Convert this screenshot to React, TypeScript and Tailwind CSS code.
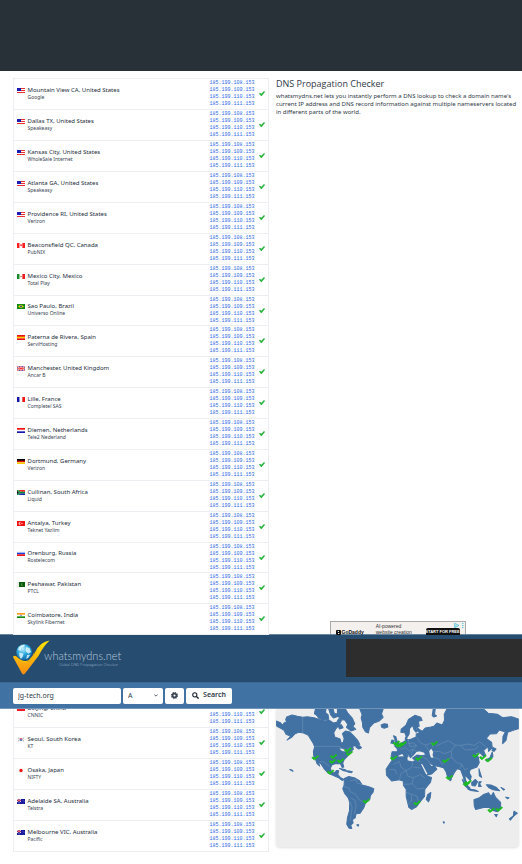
import React from "react";

type Server = { flag: string; place: string; provider: string };

const upperServers: Server[] = [
  { flag: "us", place: "Mountain View CA, United States", provider: "Google" },
  { flag: "us", place: "Dallas TX, United States", provider: "Speakeasy" },
  { flag: "us", place: "Kansas City, United States", provider: "WholeSale Internet" },
  { flag: "us", place: "Atlanta GA, United States", provider: "Speakeasy" },
  { flag: "us", place: "Providence RI, United States", provider: "Verizon" },
  { flag: "ca", place: "Beaconsfield QC, Canada", provider: "PubNIX" },
  { flag: "mx", place: "Mexico City, Mexico", provider: "Total Play" },
  { flag: "br", place: "Sao Paulo, Brazil", provider: "Universo Online" },
  { flag: "es", place: "Paterna de Rivera, Spain", provider: "ServiHosting" },
  { flag: "gb", place: "Manchester, United Kingdom", provider: "Ancar B" },
  { flag: "fr", place: "Lille, France", provider: "Completel SAS" },
  { flag: "nl", place: "Diemen, Netherlands", provider: "Tele2 Nederland" },
  { flag: "de", place: "Dortmund, Germany", provider: "Verizon" },
  { flag: "za", place: "Cullinan, South Africa", provider: "Liquid" },
  { flag: "tr", place: "Antalya, Turkey", provider: "Teknet Yazlim" },
  { flag: "ru", place: "Orenburg, Russia", provider: "Rostelecom" },
  { flag: "pk", place: "Peshawar, Pakistan", provider: "PTCL" },
  { flag: "in", place: "Coimbatore, India", provider: "Skylink Fibernet" },
];

const lowerServers: Server[] = [
  { flag: "cn", place: "Beijing, China", provider: "CNNIC" },
  { flag: "kr", place: "Seoul, South Korea", provider: "KT" },
  { flag: "jp", place: "Osaka, Japan", provider: "NIFTY" },
  { flag: "au", place: "Adelaide SA, Australia", provider: "Telstra" },
  { flag: "au", place: "Melbourne VIC, Australia", provider: "Pacific" },
];

const addresses = ["185.199.108.153", "185.199.109.153", "185.199.110.153", "185.199.111.153"];

const horizontal = (a: string, b: string, c: string) => (
  <>
    <path fill={a} d="M0 0h24v6H0z" />
    <path fill={b} d="M0 5h24v5H0z" />
    <path fill={c} d="M0 10h24v5H0z" />
  </>
);

const vertical = (a: string, b: string, c: string) => (
  <>
    <path fill={a} d="M0 0h8v15H0z" />
    <path fill={b} d="M8 0h8v15H8z" />
    <path fill={c} d="M16 0h8v15h-8z" />
  </>
);

const flags: Record<string, React.ReactNode> = {
  us: (
    <>
      <path fill="#fff" d="M0 0h24v15H0z" />
      <path fill="#ea3030" d="M12 0h12v3H12zM12 6h12v3H12zM0 12h24v3H0z" />
      <path fill="#1c1cb0" d="M0 0h12v9H0z" />
    </>
  ),
  ca: (
    <>
      {vertical("#f22", "#fff", "#f22")}
      <path fill="#f22" d="M12 2l1 3 2-1-1 5-2 1v3-3l-2-1-1-5 2 1z" />
    </>
  ),
  mx: (
    <>
      {vertical("#178a2c", "#fff", "#ee2020")}
      <circle cx="12" cy="7.500" r="2.500" fill="#a47a48" />
    </>
  ),
  br: (
    <>
      <path fill="#138a13" d="M0 0h24v15H0z" />
      <path fill="#f4d90a" d="M12 2l9 5.500-9 5.500-9-5.500z" />
      <circle cx="12" cy="7.500" r="3" fill="#2747a5" />
    </>
  ),
  es: horizontal("#e81010", "#ffd400", "#e81010"),
  gb: (
    <>
      <path fill="#1c2fa0" d="M0 0h24v15H0z" />
      <path stroke="#fff" strokeWidth="4" d="M0 0l24 15M24 0L0 15M12 0v15M0 7.500h24" />
      <path stroke="#e22" strokeWidth="2" d="M0 0l24 15M24 0L0 15M12 0v15M0 7.500h24" />
    </>
  ),
  fr: vertical("#1212a8", "#fff", "#f01414"),
  nl: horizontal("#f01010", "#fff", "#1616b0"),
  de: horizontal("#000", "#e01010", "#ffd000"),
  za: (
    <>
      <path fill="#e22" d="M0 0h24v7H0z" />
      <path fill="#1830a8" d="M0 8h24v7H0z" />
      <path stroke="#fff" strokeWidth="5" fill="none" d="M0 0l10 7.500L0 15M10 7.500h14" />
      <path stroke="#0b8a3a" strokeWidth="4" fill="none" d="M0 0l10 7.500L0 15M10 7.500h14" />
      <path fill="#111" d="M0 3l6 4.500L0 12z" />
    </>
  ),
  tr: (
    <>
      <path fill="#f01414" d="M0 0h24v15H0z" />
      <circle cx="9" cy="7.500" r="4" fill="#fff" />
      <circle cx="10.500" cy="7.500" r="3" fill="#f01414" />
      <circle cx="15" cy="7.500" r="1.500" fill="#fff" />
    </>
  ),
  ru: horizontal("#f4f4f4", "#1440e0", "#f01414"),
  pk: (
    <>
      <path fill="#eee" d="M0 0h6v15H0z" />
      <path fill="#0a5c0a" d="M6 0h18v15H6z" />
      <circle cx="15" cy="7.500" r="3" fill="#cfe3cf" />
      <circle cx="16" cy="6.500" r="3" fill="#0a5c0a" />
    </>
  ),
  in: (
    <>
      {horizontal("#ff9a1c", "#fff", "#128a12")}
      <circle cx="12" cy="7.500" r="2" fill="#5b6fb4" />
    </>
  ),
  cn: (
    <>
      <path fill="#ee1c25" d="M0 0h24v15H0z" />
      <circle cx="5" cy="5" r="2" fill="#ffde00" />
    </>
  ),
  kr: (
    <>
      <path fill="#fafafa" d="M0 0h24v15H0z" />
      <path stroke="#444" strokeWidth="2" d="M4 3l3 2M20 3l-3 2M4 12l3-2M20 12l-3-2" />
      <path fill="#e0203c" d="M8 7.500a4 4 0 018 0z" />
      <path fill="#1c4fb0" d="M8 7.500a4 4 0 008 0z" />
    </>
  ),
  jp: (
    <>
      <path fill="#fafafa" d="M0 0h24v15H0z" />
      <circle cx="12" cy="7.500" r="5" fill="#f01414" />
    </>
  ),
  au: (
    <>
      <path fill="#14149c" d="M0 0h24v15H0z" />
      <path stroke="#fff" strokeWidth="3" d="M0 0l12 8M12 0L0 8" />
      <path stroke="#e22" strokeWidth="2" d="M6 0v8M0 4h12" />
      <circle cx="18" cy="4" r="1" fill="#fff" />
      <circle cx="21" cy="7" r="1" fill="#fff" />
      <circle cx="18" cy="12" r="1" fill="#fff" />
      <circle cx="6" cy="11.500" r="1.500" fill="#fff" />
    </>
  ),
};

function Flag({ code }: { code: string }) {
  return (
    <svg viewBox="0 0 24 15" className="block h-[5px] w-2" aria-hidden="true">
      {flags[code]}
    </svg>
  );
}

function ServerTable({ servers }: { servers: Server[] }) {
  return (
    <table className="w-full border-collapse border border-[#eceef1]">
      <tbody>
        {servers.map((s) => (
          <tr key={s.place} className="h-[31px] border-b border-[#eceef1] nth-[8n]:h-[30px]">
            <td className="w-[14px] p-0 pb-[2px] pl-[3px] align-middle">
              <div className="flex h-[15px] items-start pt-[2px]">
                <Flag code={s.flag} />
              </div>
            </td>
            <td className="p-0 pb-[2px] align-middle">
              <div className="text-[6px] leading-[8px] text-[#232d3b]">{s.place}</div>
              <div className="text-[5px] leading-[7px] text-[#384252]">{s.provider}</div>
            </td>
            <td className="w-[45px] p-0 align-middle font-['Liberation_Mono',monospace] text-[5px] leading-[7px] text-[#2f68e6]">
              {addresses.map((a) => (
                <a key={a} href="#" className="block whitespace-nowrap">
                  {a}
                </a>
              ))}
            </td>
            <td className="w-[14px] p-0 pb-px pl-1 align-middle">
              <svg viewBox="0 0 18 15" className="block h-[5px] w-[6px]" role="img" aria-label="Resolved">
                <path d="M0 8l3-3 4 3L15 0l3 3L8 15H6z" fill="#28b23e" />
              </svg>
            </td>
          </tr>
        ))}
      </tbody>
    </table>
  );
}

function Logo() {
  return (
    <svg viewBox="0 0 112 108" className="h-9 w-[37px]" aria-hidden="true">
      <defs>
        <linearGradient id="gold" x1="0" y1="0" x2="0" y2="1">
          <stop offset="0" stopColor="#ffe606" />
          <stop offset="1" stopColor="#f98a10" />
        </linearGradient>
        <radialGradient id="globe" cx="0.4" cy="0.3" r="0.7">
          <stop offset="0" stopColor="#bdeeff" />
          <stop offset="0.5" stopColor="#2fa9df" />
          <stop offset="1" stopColor="#0d6cab" />
        </radialGradient>
      </defs>
      <path d="M0 51Q2 45 10 49Q34 74 50 63Q59 56 66 38Q82 4 111 1Q92 18 77 48L38 99Q31 109 26 99Z" fill="url(#gold)" />
      <circle cx="34" cy="36" r="26" fill="#234969" />
      <circle cx="34" cy="36" r="24" fill="url(#globe)" />
      <path d="M17 22q9-10 19-8l-3 7-7 2-3 9-7-2zM40 21l10 3 5 12-9 5-8-8zM19 37l13 4-3 10-5 6-5-9zM43 45l9-1-7 11-5 1z" fill="#e9fbff" opacity="0.8" />
      <path d="M11 50q22 20 38 9 10-8 16-23-2 27-27 32-17 0-27-18z" fill="#f9bd0a" />
    </svg>
  );
}

const landMasses = [
  // North America
  "M20 75L18 60 30 64 38 73 42 66 50 63 47 56 50 48 66 42 82 46 98 49 112 47 132 50 150 56 164 60 178 58 190 66 200 64 206 53 214 58 208 72 197 84 191 95 194 108 210 114 214 127 220 123 222 112 217 98 226 90 239 93 250 104 263 118 269 130 256 134 247 136 250 144 240 153 231 167 222 176 218 186 221 198 216 199 211 188 198 187 186 191 181 201 184 212 192 216 200 208 206 209 203 220 210 229 222 235 216 238 204 229 190 223 173 215 162 203 153 189 144 181 149 195 141 188 136 173 131 164 130 151 134 137 128 124 115 103 101 96 86 94 75 98 66 108 51 117 62 106 48 100 42 88 29 80Z",
  // Arctic islands
  "M136 24L168 24 166 35 174 41 176 55 159 58 146 52 141 44 133 38Z",
  "M176 24L189 24 193 38 202 38 202 24 226 24 233 36 247 52 254 68 248 76 257 85 243 90 229 79 233 70 224 57 212 56 205 46 190 51 182 42Z",
  "M204 73L214 71 219 80 208 84Z",
  // Greenland
  "M269 24L339 24 334 39 339 49 326 61 311 66 298 80 295 96 286 92 278 79 277 65 273 51 276 41Z",
  "M333 72L342 68 352 70 353 78 342 82 334 78Z",
  // Caribbean
  "M208 202L224 205 232 211 218 208ZM233 209L247 212 244 215 233 213Z",
  "M257 133L268 134 274 140 266 144 258 139Z",
  // South America
  "M223 232L236 226 255 231 268 239 276 252 296 257 311 263 309 273 301 283 299 295 286 306 281 320 270 336 258 338 255 350 247 355 249 365 242 372 245 382 237 381 230 369 232 350 238 329 239 305 235 291 224 277 218 263 222 252Z",
  "M260 371L266 371 264 375Z",
  // Africa
  "M367 176L379 168 410 167 411 179 426 183 435 179 453 184 460 204 469 225 484 229 481 243 464 264 463 286 450 302 439 317 424 325 416 319 408 286 408 264 400 253 399 240 387 236 365 240 349 222 348 204 356 192Z",
  "M472 281L482 274 480 290 475 302 468 295Z",
  // Eurasia
  "M365 176L363 164 366 152 382 152 381 142 374 136 386 134 397 124 405 120 406 108 413 117 424 114 438 108 438 99 451 94 439 91 441 81 456 91 465 81 482 78 491 76 500 66 516 72 523 58 522 40 530 24 640 24 654 37 682 40 697 50 724 47 744 54 744 83 729 88 712 94 707 118 697 128 698 106 705 93 687 87 678 98 659 99 648 112 664 124 666 140 655 151 653 137 640 148 646 163 640 167 629 155 615 156 624 168 627 185 620 198 600 205 597 215 603 226 600 238 590 228 583 223 586 237 592 249 582 238 578 224 571 206 561 203 552 215 541 236 532 227 527 211 520 200 506 196 491 193 500 204 484 219 467 223 451 190 450 180 435 178 427 171 440 162 455 164 466 162 463 154 448 149 438 151 431 160 421 170 416 162 403 149 414 166 406 171 397 157 385 162 378 173 370 177Z",
  // Scandinavia and Novaya Zemlya
  "M392 94L393 84 407 73 415 55 434 43 452 49 456 58 445 61 447 76 438 81 438 94 431 85 427 73 418 83 417 99 410 110 404 95Z",
  "M486 44L489 24 495 24 493 40 499 45 491 48Z",
  // British Isles
  "M370 104L377 107 380 119 387 126 383 133 372 132 377 122ZM365 117L372 118 370 127 362 126Z",
  // Japan
  "M668 139L677 144 671 151 665 148ZM666 153L668 166 660 176 650 180 646 177 659 170Z",
  // South East Asia
  "M576 235L587 248 600 262 595 265 583 252ZM593 264L616 267 624 271 601 268ZM604 245L615 235 622 242 615 255 605 253ZM626 242L633 242 628 248 633 256 625 256ZM626 203L630 216 634 229 627 224ZM648 251L663 252 677 258 688 269 668 266 655 259Z",
  "M538 230L543 236 539 239Z",
  // Australia and New Zealand
  "M611 296L627 290 640 280 655 275 662 286 669 274 676 289 691 304 691 320 682 332 668 328 655 318 640 319 616 325 612 315ZM673 340L681 340 678 347Z",
  "M731 330L741 336 730 345 720 357 717 353 729 344Z",
  "M59 205L66 207 69 211 63 208ZM519 362L523 363 521 366ZM692 259L703 265 700 267ZM706 288L716 290 712 293Z",
];

const inlandWater = [
  "M477 150L483 143 489 152 487 162 490 170 482 169 479 160Z",
  "M452 188L457 190 472 219 468 220ZM478 187L489 194 484 195Z",
  "M208 142L222 144 227 151 216 150Z",
];

const borders =
  "M98 49V96M134 136H208L225 148 240 139M150 181L163 184 178 196M240 240L257 235 261 246 275 250M220 256L236 260 241 272 258 281 265 294 279 303M242 290L254 297 258 315 252 340M240 301L246 320 240 360M370 190L388 181 392 198 408 209 426 198 427 184M408 209L412 225 430 230 450 220 464 230M388 236L392 217 408 209M400 250L426 248 430 230M426 248L442 264 462 261M408 274L426 280 440 285 445 301M424 281V300L414 308M430 198L452 201M359 205L375 206 379 220M385 135L394 146 405 139 417 150 430 143 440 134 429 125 414 128M414 117L419 137 439 133M442 151L427 146 424 161M440 109L449 124 465 132 477 149M498 135L516 126 535 119 555 132 571 133 590 129 613 133 628 122 646 137M555 132L543 150 523 158 508 151 491 152M543 150L545 169 559 184 575 190 583 207 593 201M488 168L506 174 516 190M516 190L530 175 545 169M571 133L585 147 613 145 625 136M482 190L471 175 455 166M575 190L569 203M465 132L485 126 488 139";

const markers: [number, number][] = [
  [135, 170], [190, 166], [187, 181], [211, 179], [237, 157], [233, 147], [181, 213], [288, 300],
  [370, 171], [378, 126], [385, 132], [392, 132], [398, 128], [440, 306], [445, 172], [492, 127],
  [526, 179], [537, 229], [616, 163], [637, 169], [655, 176], [588, 249], [593, 244], [662, 327], [686, 324],
];

function WorldMap() {
  return (
    <svg viewBox="18 24 728 414" className="block w-full rounded-b-sm bg-[#ededed] shadow-sm" role="img" aria-label="Propagation map">
      <g fill="#4272a4" stroke="#4272a4" strokeWidth="3" strokeLinejoin="round">
        {landMasses.map((d) => (
          <path key={d} d={d} />
        ))}
      </g>
      <g fill="#ededed">
        {inlandWater.map((d) => (
          <path key={d} d={d} />
        ))}
      </g>
      <path d={borders} fill="none" stroke="#6a8fb5" strokeWidth="2" />
      {markers.map(([x, y]) => (
        <path
          key={`${x}-${y}`}
          transform={`translate(${x} ${y})`}
          d="M-10 0L-5-3-1 1 8-7 11-4-1 6-4 6Z"
          fill="#18c71c"
          stroke="#1fae26"
          strokeWidth="2"
        />
      ))}
    </svg>
  );
}

function SiteHeader() {
  return (
    <header>
      <div className="flex h-12 items-stretch justify-between border-t border-[#6885a0] bg-[#264c70] pl-[13px]">
        <a href="#" className="flex items-start pt-[5px]">
          <Logo />
          <span className="-ml-[6px] mt-[9px] flex flex-col items-end">
            <span className="font-[Lato,sans-serif] text-[11px] leading-[13px] font-light text-[#b6cbdc]">whatsmydns.net</span>
            <span className="pr-[3px] text-[4px] leading-[6px] font-light text-[#9db5c9]">Global DNS Propagation Checker</span>
          </span>
        </a>
        <div className="mt-1 mb-[5px] w-[176px] bg-[#2d2d2d]" />
      </div>
      <form
        className="flex h-[27px] items-center gap-[2px] border-t border-b border-t-[#3b6a99] border-b-[#7295b9] bg-[#4072a4] pl-[13px] text-[7px] text-[#2f3947]"
        onSubmit={(e) => e.preventDefault()}
      >
        <input aria-label="Domain name" defaultValue="jg-tech.org" className="h-4 w-[108px] rounded-[2px] bg-white px-[5px] text-[7px]" />
        <div className="relative h-4 w-10">
          <select aria-label="Record type" defaultValue="A" className="h-4 w-full appearance-none rounded-[2px] bg-white pl-[5px] text-[7px] leading-4">
            <option>A</option>
          </select>
          <svg viewBox="0 0 12 8" className="pointer-events-none absolute top-[6px] right-[5px] h-[3px] w-1" aria-hidden="true">
            <path d="M1 1l5 5 5-5" fill="none" stroke="#555f6d" strokeWidth="3" />
          </svg>
        </div>
        <button type="button" aria-label="Settings" className="flex h-4 w-[19px] items-center justify-center rounded-[2px] bg-white">
          <svg viewBox="0 0 20 20" className="size-[7px]" aria-hidden="true">
            <circle cx="10" cy="10" r="8.500" fill="none" stroke="#3a4452" strokeWidth="3" strokeDasharray="4 2.600" />
            <circle cx="10" cy="10" r="5.500" fill="none" stroke="#3a4452" strokeWidth="5" />
          </svg>
        </button>
        <button type="submit" className="flex h-4 w-[46px] items-center justify-center gap-1 rounded-[2px] bg-white font-semibold">
          <svg viewBox="0 0 20 20" className="size-[7px]" aria-hidden="true">
            <circle cx="8" cy="8" r="6" fill="none" stroke="#1e2632" strokeWidth="3" />
            <path d="M12 12l7 7" stroke="#1e2632" strokeWidth="4" />
          </svg>
          Search
        </button>
      </form>
    </header>
  );
}

function AdBanner() {
  return (
    <aside className="mx-auto flex h-[13px] w-[136px] items-start border border-b-0 border-[#a9a9a9] bg-[#f3f0ee] font-['Liberation_Sans',sans-serif] text-[5px] leading-[6px] text-[#333]">
      <div className="flex items-center gap-px pt-[7px] pl-[5px] font-bold text-[#111]">
        <svg viewBox="0 0 10 10" className="size-[5px]" aria-hidden="true">
          <path d="M1 1h8v8H1zM3 8V3l4 4V2" fill="none" stroke="#111" strokeWidth="2" />
        </svg>
        GoDaddy
      </div>
      <div className="ml-3 pt-px whitespace-nowrap">
        AI-powered
        <br />
        website creation
      </div>
      <button type="button" className="mt-[6px] ml-auto flex h-[7px] w-[34px] shrink-0 items-center justify-center rounded-t-[2px] bg-[#111] text-[4px] leading-[6px] font-bold whitespace-nowrap text-white">
        START FOR FREE
      </button>
      <svg viewBox="0 0 30 15" className="mt-px -ml-[6px] mr-px h-[5px] w-[10px] shrink-0" aria-hidden="true">
        <path d="M2 1l13 6.500L2 14zM6 6v5" fill="none" stroke="#22b5d3" strokeWidth="2" />
        <path d="M25 0h3v3h-3zM25 6h3v3h-3zM25 12h3v3h-3z" fill="#22b5d3" />
      </svg>
    </aside>
  );
}

export default function App() {
  return (
    <div className="bg-white pb-3 font-['Noto_Sans',sans-serif] text-[#2f3947]">
      <div className="h-[71px] bg-[#283038]" />
      <main>
        <section className="grid grid-cols-[256px_1fr] gap-[7px] pt-[7px] pr-[3px] pl-[13px]">
          <div className="-mb-px">
            <ServerTable servers={upperServers} />
          </div>
          <div className="flex flex-col">
            <h1 className="font-['Open_Sans',sans-serif] text-[9px] leading-3">DNS Propagation Checker</h1>
            <p className="mt-[2px] text-[6px] leading-[8px]">
              whatsmydns.net lets you instantly perform a DNS lookup to check a domain name's current IP address and DNS record
              information against multiple nameservers located in different parts of the world.
            </p>
            <div className="mt-auto">
              <AdBanner />
            </div>
          </div>
        </section>
        <SiteHeader />
        <section className="grid grid-cols-[256px_1fr] items-start gap-[7px] pr-[3px] pl-[13px]">
          <div className="overflow-hidden">
            <div className="-mt-[13px]">
              <ServerTable servers={lowerServers} />
            </div>
          </div>
          <WorldMap />
        </section>
      </main>
    </div>
  );
}
